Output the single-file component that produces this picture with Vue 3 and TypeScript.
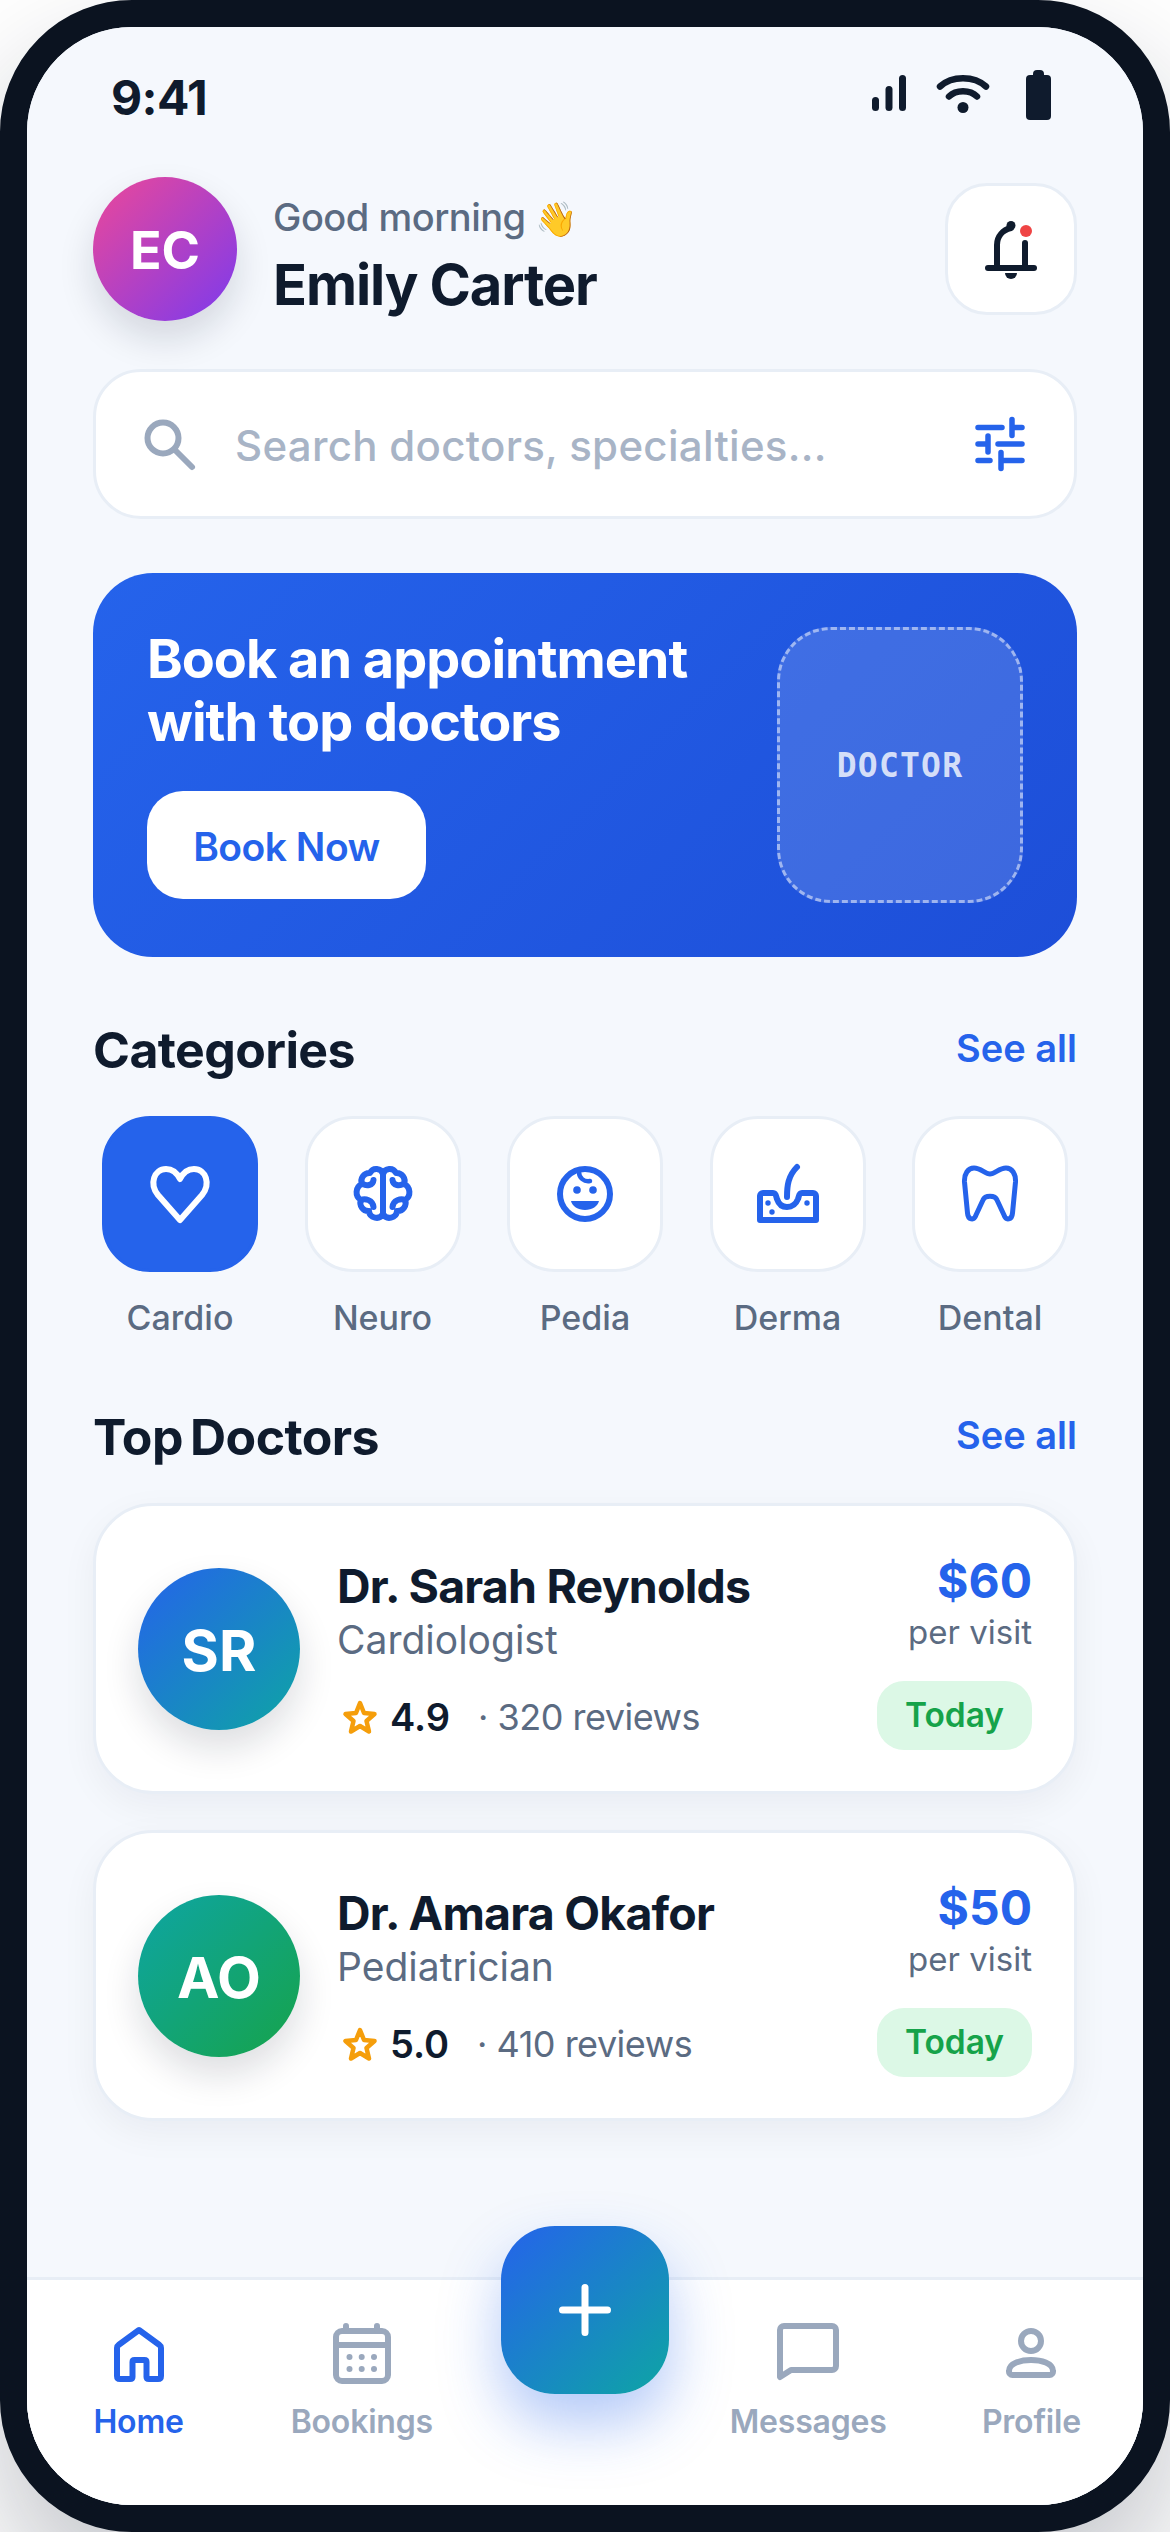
<script setup lang="ts">
interface Category {
  name: string
  active?: boolean
}

interface Doctor {
  initials: string
  name: string
  specialty: string
  rating: string
  reviews: string
  price: string
  tone: string
}

const categories: Category[] = [
  { name: 'Cardio', active: true },
  { name: 'Neuro' },
  { name: 'Pedia' },
  { name: 'Derma' },
  { name: 'Dental' },
]

const doctors: Doctor[] = [
  { initials: 'SR', name: 'Dr. Sarah Reynolds', specialty: 'Cardiologist', rating: '4.9', reviews: '· 320 reviews', price: '$60', tone: 'blue' },
  { initials: 'AO', name: 'Dr. Amara Okafor', specialty: 'Pediatrician', rating: '5.0', reviews: '· 410 reviews', price: '$50', tone: 'green' },
]
</script>

<template>
  <div class="phone">
    <div class="screen">
      <div class="status">
        <span class="time">9:41</span>
        <div class="status-icons">
          <svg width="40" height="50" viewBox="0 0 40 50">
            <rect x="4" y="25" width="7" height="14" rx="3.5" />
            <rect x="17.5" y="14" width="7" height="25" rx="3.5" />
            <rect x="31" y="3" width="7" height="36" rx="3.5" />
          </svg>
          <svg width="54" height="50" viewBox="0 0 54 50">
            <path class="wifi" d="M4 14.5 C16 3.5 38 3.5 50 14.5" />
            <path class="wifi" d="M13 24.5 C20 17.5 34 17.5 41 24.5" />
            <circle cx="27" cy="35.5" r="5.5" />
          </svg>
          <svg width="40" height="60" viewBox="0 0 40 60">
            <rect x="15" y="3" width="11" height="10" rx="4" />
            <rect x="8" y="8" width="25" height="45" rx="4" />
          </svg>
        </div>
      </div>

      <div class="content">
        <div class="header">
          <div class="avatar-me">EC</div>
          <div class="hello">
            <span class="greet">Good morning <span class="wave">👋</span></span>
            <span class="me">Emily Carter</span>
          </div>
          <button class="bell">
            <svg width="72" height="72" viewBox="0 0 72 72">
              <path class="ink-line" d="M13 55 H59" />
              <path class="ink-line" d="M22 55 V32 C22 23 28 17 36 15" />
              <path class="ink-line" d="M50 30 V55" />
              <circle cx="36" cy="12.5" r="4.5" fill="#0f1b2d" />
              <path d="M30 60 H42 A6 6 0 0 1 30 60 Z" fill="#0f1b2d" />
              <circle cx="51" cy="18" r="6" fill="#ef4444" />
            </svg>
          </button>
        </div>

        <div class="search">
          <svg width="60" height="60" viewBox="0 0 60 60">
            <circle cx="23" cy="24" r="15.5" class="grey-line" />
            <path class="grey-line" d="M35 36 L52 53" />
          </svg>
          <span class="placeholder">Search doctors, specialties...</span>
          <svg width="60" height="60" viewBox="0 0 60 60">
            <path class="blue-line" d="M7 13.5 H31 M41 5.5 V21.5 M41 13.5 H51 M7 30 H17 M17 22 V38 M27 30 H51 M7 46.5 H19 M30 38.5 V54.5 M30 46.5 H51" />
          </svg>
        </div>

        <div class="banner">
          <div class="banner-copy">
            <h1>Book an appointment<br />with top doctors</h1>
            <button class="book">Book Now</button>
          </div>
          <div class="doctor-slot">DOCTOR</div>
        </div>

        <div class="section-head">
          <h2>Categories</h2>
          <span class="see-all">See all</span>
        </div>

        <div class="categories">
          <div v-for="cat in categories" :key="cat.name" class="category">
            <div class="tile" :class="{ active: cat.active }">
              <svg v-if="cat.name === 'Cardio'" width="72" height="72" viewBox="0 0 72 72">
                <path class="tile-line" d="M36 62 L14 37 C5 26 10 11 22 11 C28 11 33 15 36 21 C39 15 44 11 50 11 C62 11 67 26 58 37 Z" />
              </svg>
              <svg v-else-if="cat.name === 'Neuro'" width="60" height="60" viewBox="0 0 60 60">
                <g v-for="m in [0, 1]" :key="m" :transform="m ? 'matrix(-1 0 0 1 60 0)' : ''">
                  <path class="tile-line" d="M30 8 V52 M30 10 A7 7 0 0 0 17 9 A8 8 0 0 0 9 20 A9 9 0 0 0 8 36 A8 8 0 0 0 16 47 A7.5 7.5 0 0 0 30 50 M10 20 C13 22 20 22 20.500 16 M8 36 C12 34 20 36 20.500 43" />
                </g>
              </svg>
              <svg v-else-if="cat.name === 'Pedia'" width="60" height="60" viewBox="0 0 60 60">
                <circle class="tile-line" cx="30" cy="30" r="25" />
                <circle cx="22" cy="26" r="3.8" fill="#2563eb" />
                <circle cx="38" cy="26" r="3.8" fill="#2563eb" />
                <path d="M16 37 H44 C43 42 37 46 30 46 C23 46 17 42 16 37 Z" fill="#2563eb" />
                <path class="thin-line" d="M24 8 C24 14 29 18 35 17" />
              </svg>
              <svg v-else-if="cat.name === 'Derma'" width="72" height="72" viewBox="0 0 72 72">
                <path class="tile-line" d="M11 35 H21 C24 35 24 38 25 41 C27 47 31 49 35 49 C40 49 44 46 46 41 C47 38 47 35 50 35 H61 A3 3 0 0 1 64 38 V62 H8 V38 A3 3 0 0 1 11 35 Z" />
                <path class="tile-line" d="M35 39 C35 28 36 18 45 9" />
                <circle cx="16" cy="45" r="2.7" fill="#2563eb" />
                <circle cx="20" cy="54" r="2.7" fill="#2563eb" />
                <circle cx="55" cy="45" r="2.7" fill="#2563eb" />
              </svg>
              <svg v-else width="60" height="60" viewBox="0 0 60 60">
                <path class="tooth" d="M30 10 C25 10 21 4 14 4 C8 4 4 10 4.5 18 L7.5 49 C8 56 14 57 16 51 L23 36 C25 31 35 31 37 36 L44 51 C46 57 52 56 52.5 49 L55.5 18 C56 10 52 4 46 4 C39 4 35 10 30 10 Z" />
              </svg>
            </div>
            <span class="cat-name">{{ cat.name }}</span>
          </div>
        </div>

        <div class="section-head doctors-head">
          <h2>Top Doctors</h2>
          <span class="see-all">See all</span>
        </div>

        <div class="doctors">
          <div v-for="doc in doctors" :key="doc.initials" class="card">
            <div class="doc-avatar" :class="doc.tone">{{ doc.initials }}</div>
            <div class="doc-main">
              <span class="doc-name">{{ doc.name }}</span>
              <span class="doc-spec">{{ doc.specialty }}</span>
              <div class="doc-rating">
                <svg width="36" height="36" viewBox="0 0 36 36">
                  <path d="M18 4 L22 14 L32.500 15 L24.500 22 L27 32.500 L18 27 L9 32.500 L11.500 22 L3.500 15 L14 14 Z" fill="none" stroke="#f59e0b" stroke-width="4.500" stroke-linejoin="round" />
                </svg>
                <span class="score">{{ doc.rating }}</span>
                <span class="reviews">{{ doc.reviews }}</span>
              </div>
            </div>
            <div class="doc-side">
              <span class="price">{{ doc.price }}</span>
              <span class="per">per visit</span>
              <span class="today">Today</span>
            </div>
          </div>
        </div>
      </div>

      <nav class="nav">
        <div class="nav-item on">
          <svg width="60" height="66" viewBox="0 0 60 66">
            <path d="M30 9 L9.500 24 Q8 25 8 27 V55 Q8 58 11 58 H21 Q23.500 58 23.500 56 V41 Q23.500 39 25.500 39 H35.500 Q37.500 39 37.500 41 V56 Q37.500 58 40 58 H49 Q52 58 52 55 V27 Q52 25 50.500 24 Z" />
          </svg>
          <span>Home</span>
        </div>
        <div class="nav-item">
          <svg width="60" height="66" viewBox="0 0 60 66">
            <rect x="4" y="10" width="52" height="50" rx="6" />
            <path d="M4 24 H56 M14 5 V9 M45 5 V9" />
            <g class="dots">
              <circle cx="17.500" cy="36" r="3" />
              <circle cx="29.700" cy="36" r="3" />
              <circle cx="42" cy="36" r="3" />
              <circle cx="17.500" cy="48" r="3" />
              <circle cx="29.700" cy="48" r="3" />
              <circle cx="42" cy="48" r="3" />
            </g>
          </svg>
          <span>Bookings</span>
        </div>
        <div class="nav-item spacer"></div>
        <div class="nav-item">
          <svg width="64" height="66" viewBox="0 0 64 66">
            <path d="M4 9 A4 4 0 0 1 8 5 H56 A4 4 0 0 1 60 9 V45 A4 4 0 0 1 56 49 H15 L4 56 Z" />
          </svg>
          <span>Messages</span>
        </div>
        <div class="nav-item">
          <svg width="60" height="66" viewBox="0 0 60 66">
            <circle cx="30" cy="20" r="10" />
            <path d="M8 50 C8 42 20 39 30 39 C40 39 52 42 52 50 A3.500 3.500 0 0 1 48.500 54 H11.500 A3.500 3.500 0 0 1 8 50 Z" />
          </svg>
          <span>Profile</span>
        </div>
      </nav>

      <button class="fab">
        <svg width="60" height="60" viewBox="0 0 60 60">
          <path d="M30 7.500 V52.500 M7.500 30 H52.500" />
        </svg>
      </button>
    </div>
  </div>
</template>

<style scoped>
.phone {
  width: 1170px;
  height: 2532px;
  box-sizing: border-box;
  border: 27px solid #0b1320;
  border-radius: 132px;
  background: #f5f8fd;
  box-shadow: 0 60px 120px rgba(15, 23, 42, 0.25);
  overflow: hidden;
  font-family: Inter, sans-serif;
  color: #0f1b2d;
}

.screen {
  position: relative;
  height: 100%;
  display: flex;
  flex-direction: column;
  background: #f5f8fd;
}

.status {
  box-sizing: border-box;
  height: 100px;
  padding: 40px 85px 0 84px;
  display: flex;
  align-items: center;
  justify-content: space-between;
}

.time {
  font-size: 48px;
  font-weight: 700;
  letter-spacing: -0.6px;
}

.status-icons {
  display: flex;
  align-items: center;
  gap: 28px;
}

.status-icons svg {
  fill: #0f1b2d;
}

.wifi {
  fill: none;
  stroke: #0f1b2d;
  stroke-width: 6.5;
  stroke-linecap: round;
}

.content {
  flex: 1;
  padding: 50px 66px 0;
}

.header {
  display: flex;
  align-items: center;
}

.avatar-me {
  box-sizing: border-box;
  padding-top: 3px;
  width: 144px;
  height: 144px;
  border-radius: 50%;
  background: linear-gradient(135deg, #ec4899, #7c3aed);
  box-shadow: 0 18px 36px rgba(15, 23, 42, 0.14);
  color: #fff;
  font-size: 52px;
  font-weight: 700;
  display: flex;
  align-items: center;
  justify-content: center;
}

.hello {
  margin-left: 36px;
  padding-top: 13px;
  flex: 1;
  display: flex;
  flex-direction: column;
  gap: 9px;
}

.greet {
  font-size: 38px;
  font-weight: 500;
  color: #5b6b82;
  line-height: 48px;
  letter-spacing: -0.5px;
}

.wave {
  font-size: 34px;
  letter-spacing: 0;
}

.me {
  font-size: 56px;
  font-weight: 700;
  line-height: 66px;
  letter-spacing: -1.1px;
}

.bell {
  width: 132px;
  height: 132px;
  box-sizing: border-box;
  border: 3px solid #e8eef6;
  border-radius: 42px;
  background: #fff;
  padding: 0;
  display: flex;
  align-items: center;
  justify-content: center;
}

.ink-line {
  fill: none;
  stroke: #0f1b2d;
  stroke-width: 6;
  stroke-linecap: round;
}

.search {
  margin-top: 48px;
  height: 150px;
  box-sizing: border-box;
  border: 3px solid #e8eef6;
  border-radius: 48px;
  background: #fff;
  padding: 0 43px 0 44px;
  display: flex;
  align-items: center;
}

.placeholder {
  flex: 1;
  margin-left: 35px;
  padding-top: 2px;
  font-size: 42px;
  font-weight: 500;
  color: #a8b4c6;
  letter-spacing: 0.3px;
}

.grey-line {
  fill: none;
  stroke: #9aa8bd;
  stroke-width: 6;
  stroke-linecap: round;
}

.blue-line {
  fill: none;
  stroke: #2563eb;
  stroke-width: 5.5;
  stroke-linecap: round;
}

.banner {
  margin-top: 54px;
  height: 384px;
  box-sizing: border-box;
  border-radius: 60px;
  background: linear-gradient(135deg, #2563eb, #1d4ed8);
  padding: 54px;
  display: flex;
  justify-content: space-between;
}

.banner h1 {
  margin: 0;
  font-size: 54px;
  line-height: 63px;
  font-weight: 700;
  color: #fff;
  letter-spacing: -1px;
}

.book {
  margin-top: 38px;
  width: 279px;
  height: 108px;
  padding: 3px 0 0;
  border: none;
  border-radius: 36px;
  background: #fff;
  color: #2563eb;
  font-family: inherit;
  font-size: 39px;
  font-weight: 600;
  letter-spacing: -0.5px;
}

.doctor-slot {
  width: 246px;
  height: 276px;
  box-sizing: border-box;
  border: 3px dashed rgba(255, 255, 255, 0.5);
  border-radius: 54px;
  background: rgba(255, 255, 255, 0.14);
  color: rgba(255, 255, 255, 0.8);
  font-family: 'DejaVu Sans Mono', monospace;
  font-size: 33px;
  font-weight: 700;
  letter-spacing: 1.2px;
  display: flex;
  align-items: center;
  justify-content: center;
}

.section-head {
  margin-top: 60px;
  height: 66px;
  display: flex;
  align-items: center;
  justify-content: space-between;
}

.doctors-head {
  margin-top: 64px;
}

.section-head h2 {
  margin: 0;
  font-size: 50px;
  font-weight: 700;
  letter-spacing: -0.6px;
  word-spacing: -4px;
}

.see-all {
  margin-top: -4px;
  font-size: 38px;
  font-weight: 600;
  color: #2563eb;
}

.categories {
  margin-top: 33px;
  padding: 0 9px;
  display: flex;
  justify-content: space-between;
}

.category {
  display: flex;
  flex-direction: column;
  align-items: center;
  gap: 23px;
}

.tile {
  width: 156px;
  height: 156px;
  box-sizing: border-box;
  border: 3px solid #e8eef6;
  border-radius: 48px;
  background: #fff;
  display: flex;
  align-items: center;
  justify-content: center;
  color: #2563eb;
}

.tile.active {
  border-color: #2563eb;
  background: #2563eb;
  color: #fff;
}

.tile-line {
  fill: none;
  stroke: currentColor;
  stroke-width: 6;
  stroke-linecap: round;
  stroke-linejoin: round;
}

.thin-line {
  fill: none;
  stroke: #2563eb;
  stroke-width: 4.5;
  stroke-linecap: round;
}

.tooth {
  fill: none;
  stroke: #2563eb;
  stroke-width: 5;
  stroke-linejoin: round;
}

.cat-name {
  font-size: 34px;
  line-height: 45px;
  font-weight: 500;
  color: #5b6b82;
}

.doctors {
  margin-top: 33px;
  display: flex;
  flex-direction: column;
  gap: 36px;
}

.card {
  height: 291px;
  box-sizing: border-box;
  border: 3px solid #e8eef6;
  border-radius: 60px;
  background: #fff;
  box-shadow: 0 12px 36px rgba(15, 23, 42, 0.05);
  padding: 0 42px;
  display: flex;
  align-items: center;
}

.doc-avatar {
  box-sizing: border-box;
  padding-top: 3px;
  width: 162px;
  height: 162px;
  flex: none;
  border-radius: 50%;
  color: #fff;
  font-size: 57px;
  font-weight: 700;
  box-shadow: 0 18px 36px rgba(15, 23, 42, 0.14);
  display: flex;
  align-items: center;
  justify-content: center;
}

.doc-avatar.blue {
  background: linear-gradient(135deg, #2563eb, #0ea5a4);
}

.doc-avatar.green {
  background: linear-gradient(135deg, #0ea5a4, #16a34a);
}

.doc-main {
  flex: 1;
  margin-left: 37px;
  display: flex;
  flex-direction: column;
}

.doc-name {
  font-size: 46.5px;
  line-height: 56px;
  font-weight: 700;
  letter-spacing: -0.8px;
}

.doc-spec {
  margin-top: 2px;
  font-size: 39px;
  line-height: 48px;
  color: #5b6b82;
}

.doc-rating {
  margin-top: 30px;
  padding-left: 5px;
  display: flex;
  align-items: center;
}

.score {
  margin-left: 12px;
  font-size: 38px;
  font-weight: 600;
}

.reviews {
  margin-left: 28px;
  font-size: 36px;
  letter-spacing: -0.5px;
  color: #5b6b82;
}

.doc-side {
  padding-top: 3px;
  display: flex;
  flex-direction: column;
  align-items: flex-end;
}

.price {
  font-size: 48px;
  line-height: 60px;
  font-weight: 700;
  color: #2563eb;
}

.per {
  font-size: 33px;
  line-height: 42px;
  color: #5b6b82;
}

.today {
  margin-top: 28px;
  width: 155px;
  height: 69px;
  border-radius: 27px;
  background: #dcf8e6;
  color: #16a34a;
  font-size: 33.5px;
  font-weight: 600;
  display: flex;
  align-items: center;
  justify-content: center;
}

.nav {
  height: 228px;
  box-sizing: border-box;
  border-top: 3px solid #e8eef6;
  background: #fff;
  display: grid;
  grid-template-columns: repeat(5, 1fr);
}

.nav-item {
  padding-top: 41px;
  display: flex;
  flex-direction: column;
  align-items: center;
  color: #9aa8bd;
  font-size: 32px;
  font-weight: 600;
  letter-spacing: -0.2px;
}

.nav-item span {
  margin-top: 15px;
}

.nav-item.on {
  color: #2563eb;
}

.nav-item svg {
  fill: none;
  stroke: currentColor;
  stroke-width: 6;
  stroke-linecap: round;
  stroke-linejoin: round;
}

.dots {
  fill: currentColor;
  stroke: none;
}

.fab {
  position: absolute;
  left: 474px;
  top: 2199px;
  width: 168px;
  height: 168px;
  border: none;
  border-radius: 54px;
  padding: 0;
  background: linear-gradient(135deg, #2563eb, #0ea5a4);
  box-shadow: 0 30px 60px rgba(37, 99, 235, 0.35);
  display: flex;
  align-items: center;
  justify-content: center;
}

.fab svg {
  fill: none;
  stroke: #fff;
  stroke-width: 7;
  stroke-linecap: round;
}
</style>

<style>
body {
  background: #fff;
}
</style>
